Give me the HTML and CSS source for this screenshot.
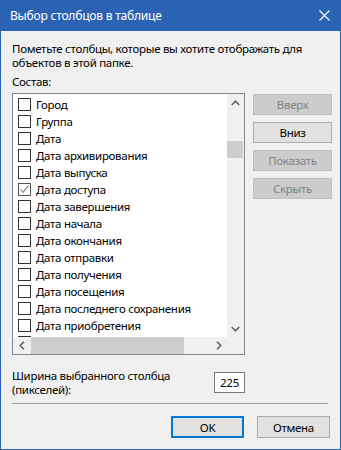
FILE: index.html
```html
<!DOCTYPE html>
<html lang="ru">
<head>
    <meta charset="UTF-8">
    <title>Выбор столбцов в таблице</title>
    <link rel="stylesheet" href="styles.css">
</head>
<body>
<div class="window">
    <div class="titlebar">
        <span class="title">Выбор столбцов в таблице</span>
        <svg class="close" width="11" height="11" viewBox="0 0 11 11">
            <path d="M0.5 0.5 L10.5 10.5 M10.5 0.5 L0.5 10.5" stroke="#fff" stroke-width="1.1" fill="none"/>
        </svg>
    </div>

    <div class="content">
        <p class="hint">Пометьте столбцы, которые вы хотите отображать для объектов в этой папке.</p>
        <div class="label">Состав:</div>

        <div class="main">
            <div class="listbox">
                <div class="list-view">
                    <ul class="items">
                        <li><span class="check"></span>Город</li>
                        <li><span class="check"></span>Группа</li>
                        <li><span class="check"></span>Дата</li>
                        <li><span class="check"></span>Дата архивирования</li>
                        <li><span class="check"></span>Дата выпуска</li>
                        <li><span class="check checked"><svg width="11" height="11" viewBox="0 0 11 11"><path d="M1.5 5.5 L4 8.5 L9.5 1.5" stroke="#555" stroke-width="1" fill="none"/></svg></span>Дата доступа</li>
                        <li><span class="check"></span>Дата завершения</li>
                        <li><span class="check"></span>Дата начала</li>
                        <li><span class="check"></span>Дата окончания</li>
                        <li><span class="check"></span>Дата отправки</li>
                        <li><span class="check"></span>Дата получения</li>
                        <li><span class="check"></span>Дата посещения</li>
                        <li><span class="check"></span>Дата последнего сохранения</li>
                        <li><span class="check"></span>Дата приобретения</li>
                        <li><span class="check"></span>Дата создания</li>
                    </ul>
                </div>
                <div class="vscroll">
                    <div class="arrow">
                        <svg width="9" height="6" viewBox="0 0 9 6"><path d="M0.7 5 L4.5 1.2 L8.3 5" stroke="#606060" stroke-width="1.6" fill="none"/></svg>
                    </div>
                    <div class="vthumb"></div>
                    <div class="track"></div>
                    <div class="arrow">
                        <svg width="9" height="6" viewBox="0 0 9 6"><path d="M0.7 1 L4.5 4.8 L8.3 1" stroke="#606060" stroke-width="1.6" fill="none"/></svg>
                    </div>
                </div>
                <div class="hscroll">
                    <div class="arrow">
                        <svg width="6" height="9" viewBox="0 0 6 9"><path d="M5 0.7 L1.2 4.5 L5 8.3" stroke="#606060" stroke-width="1.6" fill="none"/></svg>
                    </div>
                    <div class="hthumb"></div>
                    <div class="track"></div>
                    <div class="arrow">
                        <svg width="6" height="9" viewBox="0 0 6 9"><path d="M1 0.7 L4.8 4.5 L1 8.3" stroke="#606060" stroke-width="1.6" fill="none"/></svg>
                    </div>
                </div>
                <div class="corner"></div>
            </div>

            <div class="side-buttons">
                <button class="btn" disabled>Вверх</button>
                <button class="btn">Вниз</button>
                <button class="btn" disabled>Показать</button>
                <button class="btn" disabled>Скрыть</button>
            </div>
        </div>

        <div class="width-row">
            <div class="width-label">Ширина выбранного столбца<br>(пикселей):</div>
            <div class="width-input">225</div>
        </div>

        <div class="separator"></div>

        <div class="footer">
            <button class="btn btn-default">OK</button>
            <button class="btn btn-cancel">Отмена</button>
        </div>
    </div>
</div>
</body>
</html>
```

FILE: styles.css
```css
:root {
    --title-color: #2b63b4;
    --face-color: #f0f0f0;
    --font-family: "Noto Sans", "Segoe UI", Arial, sans-serif;
}
* {
    box-sizing: border-box;
}
body {
    margin: 0;
    padding: 0;
    font-family: var(--font-family);
    font-size: 11.5px;
    letter-spacing: -0.3px;
    line-height: 14px;
    color: #000;
    background-color: var(--face-color);
}
.window {
    width: 341px;
    height: 450px;
    border: 1px solid var(--title-color);
    border-top: none;
    background-color: var(--face-color);
    overflow: hidden;
}
.titlebar {
    height: 31px;
    margin: 0 -1px;
    padding: 0 10px;
    background-color: var(--title-color);
    color: #fff;
    display: flex;
    align-items: center;
    justify-content: space-between;
}
.title {
    font-size: 12px;
    letter-spacing: -0.2px;
}
.close {
    margin-right: 1px;
}
.content {
    padding: 11px 8px 0 11px;
}
.hint {
    margin: 0;
}
.label {
    margin-top: 5px;
}
.main {
    display: flex;
    gap: 8px;
    margin-top: 4px;
}
.listbox {
    width: 233px;
    height: 262px;
    border: 1px solid #828790;
    background-color: #fff;
    display: grid;
    grid-template-columns: 214px 17px;
    grid-template-rows: 243px 17px;
}
.list-view {
    overflow: hidden;
}
.items {
    list-style: none;
    margin: 0;
    padding: 2px 0 0 0;
    white-space: nowrap;
}
.items li {
    height: 17px;
    line-height: 17px;
    display: flex;
    align-items: center;
}
.check {
    width: 13px;
    height: 13px;
    margin: 0 5px 0 5px;
    border: 1px solid #333;
    background-color: #fff;
    display: flex;
    align-items: center;
    justify-content: center;
    flex-shrink: 0;
}
.check.checked {
    border-color: #555;
}
.vscroll,
.hscroll {
    background-color: var(--face-color);
    display: flex;
}
.vscroll {
    flex-direction: column;
}
.arrow {
    width: 17px;
    height: 17px;
    display: flex;
    align-items: center;
    justify-content: center;
    flex-shrink: 0;
}
.track {
    flex: 1;
}
.vthumb {
    height: 17px;
    margin: 30px 1px 0 0;
    background-color: #cdcdcd;
}
.hthumb {
    width: 153px;
    margin: 0 0 0 1px;
    background-color: #cdcdcd;
}
.corner {
    background-color: var(--face-color);
}
.side-buttons {
    display: flex;
    flex-direction: column;
    gap: 7px;
    padding-top: 1px;
}
.btn {
    font-family: var(--font-family);
    font-size: 11.5px;
    letter-spacing: -0.3px;
    width: 79px;
    height: 21px;
    padding: 0;
    border: 1px solid #adadad;
    background-color: #e1e1e1;
    color: #000;
}
.btn:disabled {
    border-color: #bfbfbf;
    background-color: #cccccc;
    color: #838383;
}
.width-row {
    display: flex;
    justify-content: space-between;
    width: 233px;
    margin-top: 14px;
}
.width-input {
    width: 31px;
    height: 21px;
    margin-top: 3px;
    border: 1px solid #7a7a7a;
    background-color: #fff;
    text-align: center;
    line-height: 19px;
}
.separator {
    height: 1px;
    margin: 6px 4px 0 0;
    background-color: #a0a0a0;
}
.footer {
    display: flex;
    justify-content: flex-end;
    gap: 13px;
    margin: 12px 2px 0 0;
}
.footer .btn {
    width: 73px;
    height: 22px;
}
.btn-default {
    border: 2px solid #0078d7;
}
```
